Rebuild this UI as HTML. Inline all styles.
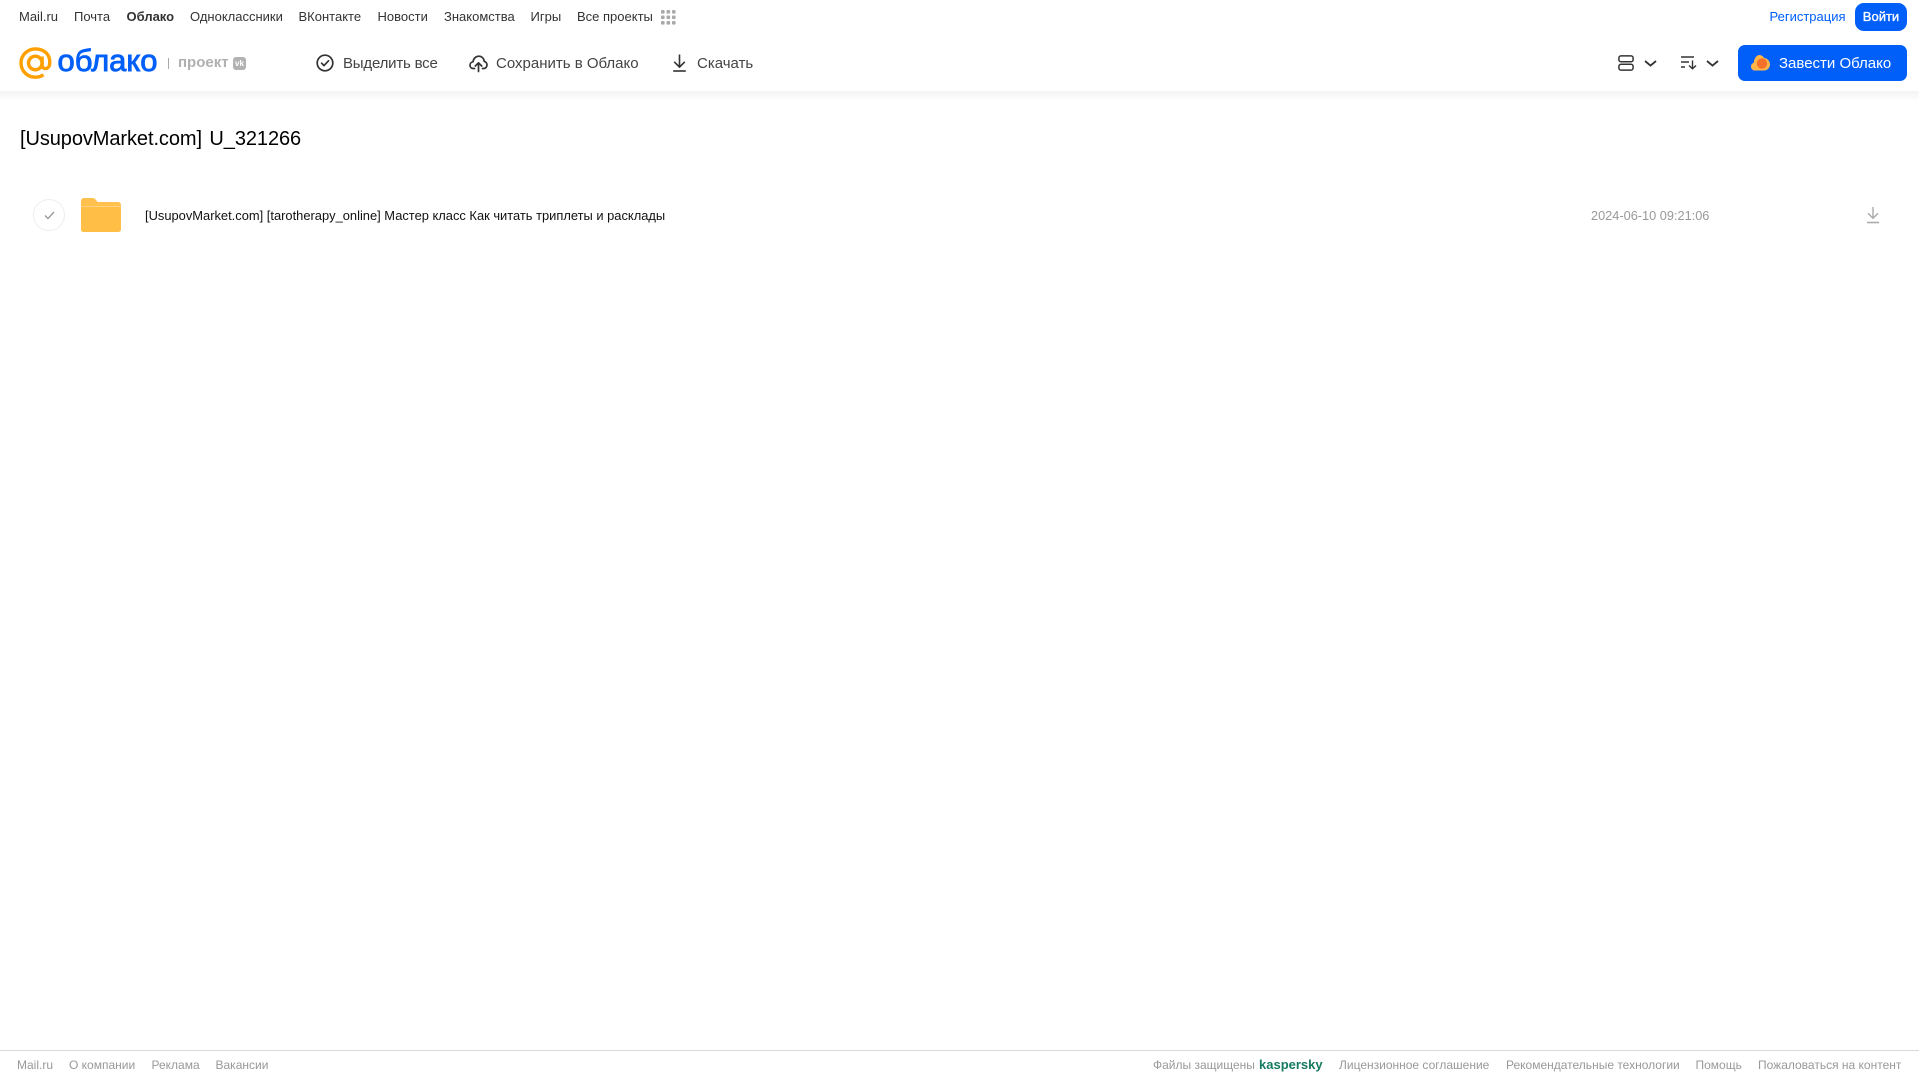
<!DOCTYPE html>
<html lang="ru"><head><meta charset="utf-8"><title>Облако</title>
<style>
html,body{margin:0;padding:0;width:1919px;height:1079px;overflow:hidden;background:#fff;font-family:"Liberation Sans",Arial,sans-serif}
.t{position:absolute;white-space:nowrap;line-height:16px}
.n{top:9px;font-size:13px;color:#333;height:16px}
.h{top:56px;font-size:15px;color:#444;line-height:16px}
.f{top:1057px;font-size:12px;color:#999}
svg{position:absolute;overflow:visible}
</style></head><body>
<div style="position:absolute;left:0;top:91px;width:1919px;height:10px;background:linear-gradient(#f3f3f3,#fff)"></div>

<span class="t n" style="left:19px">Mail.ru</span>
<span class="t n" style="left:74px">Почта</span>
<span class="t n" style="left:126.5px;font-weight:bold">Облако</span>
<span class="t n" style="left:190px">Одноклассники</span>
<span class="t n" style="left:298.5px">ВКонтакте</span>
<span class="t n" style="left:377.5px">Новости</span>
<span class="t n" style="left:444px">Знакомства</span>
<span class="t n" style="left:530.5px">Игры</span>
<span class="t n" style="left:577px">Все проекты</span>
<svg style="left:661px;top:10px" width="15" height="15" fill="#aaa"><rect x="0" y="0" width="3.6" height="3.6" rx="1"/><rect x="5.5" y="0" width="3.6" height="3.6" rx="1"/><rect x="11" y="0" width="3.6" height="3.6" rx="1"/><rect x="0" y="5.5" width="3.6" height="3.6" rx="1"/><rect x="5.5" y="5.5" width="3.6" height="3.6" rx="1"/><rect x="11" y="5.5" width="3.6" height="3.6" rx="1"/><rect x="0" y="11" width="3.6" height="3.6" rx="1"/><rect x="5.5" y="11" width="3.6" height="3.6" rx="1"/><rect x="11" y="11" width="3.6" height="3.6" rx="1"/></svg>

<span class="t n" style="left:1769.5px;color:#005ff9">Регистрация</span>
<div style="position:absolute;left:1855px;top:3px;width:52px;height:28px;border-radius:9px;background:#005ff9;color:#fff;font-size:13px;-webkit-text-stroke:.35px #fff;text-align:center;line-height:28px">Войти</div>

<svg style="left:19px;top:47px" width="33" height="33" viewBox="0 0 33 33" fill="none" stroke="#ffa000" stroke-width="3.4"><circle cx="16.3" cy="16" r="6.8"/><path d="M23.1 9.5V18.5C23.1 22.5 29.8 23 30.6 17.5C32 7.5 25 1.9 16.3 1.9C8.5 1.9 2 8.2 2 16C2 24 8.5 30.2 16.3 30.2C19.5 30.2 22 29.4 24.5 27.8"/></svg>
<svg style="left:0;top:0" width="300" height="90"><text x="57.5" y="71" font-size="31" fill="#005ff9" stroke="#005ff9" stroke-width=".9" textLength="100" lengthAdjust="spacingAndGlyphs" font-family="Liberation Sans, sans-serif">облако</text></svg>
<div style="position:absolute;left:168px;top:58px;width:1px;height:11px;background:#aaa"></div>
<span class="t" style="left:178px;top:55px;font-size:15px;font-weight:bold;color:#b0b0b0">проект</span>
<div style="position:absolute;left:233px;top:57px;width:13px;height:13px;border-radius:3px;background:#b2b2b2;color:#fff;font-size:8px;font-weight:bold;line-height:13px;text-align:center">vk</div>

<svg style="left:316px;top:54px" width="18" height="18" fill="none" stroke="#333" stroke-width="1.7"><circle cx="9" cy="9" r="7.8"/><path d="M5.6 9.2l2.4 2.4 4.5-4.8" stroke-linecap="round" stroke-linejoin="round"/></svg>
<span class="t h" style="left:343px;letter-spacing:-.2px">Выделить все</span>
<svg style="left:469px;top:55px" width="19" height="17" fill="none" stroke="#333" stroke-width="1.7" stroke-linecap="round" stroke-linejoin="round"><path d="M5.5 13.5H4.5C2.3 13.5 1 11.9 1 10.2C1 8.4 2.3 7 4 6.8C4.5 3.5 6.8 1.2 9.8 1.2C12.7 1.2 15 3.4 15.3 6.5C17 6.8 18 8.3 18 10C18 12 16.5 13.5 14.5 13.5H13.5"/><path d="M9.5 16.5V8M6.3 11l3.2-3.2 3.2 3.2"/></svg>
<span class="t h" style="left:496px">Сохранить в Облако</span>
<svg style="left:672px;top:54px" width="15" height="18" fill="none" stroke="#333" stroke-width="1.6"><path d="M7.5 0.5V13M2.2 7.8l5.3 5.3 5.3-5.3"/><path d="M1.2 17H13.8"/></svg>
<span class="t h" style="left:697px">Скачать</span>

<svg style="left:1618px;top:55px" width="16" height="16" fill="none" stroke="#333" stroke-width="1.5"><rect x=".9" y=".9" width="14.2" height="5.8" rx="2"/><rect x=".9" y="9.3" width="14.2" height="5.8" rx="2"/></svg>
<svg style="left:1643.5px;top:60px" width="13" height="7" fill="none" stroke="#333" stroke-width="1.8"><path d="M1 1l5.5 4.6L12 1"/></svg>
<svg style="left:1681px;top:56px" width="16" height="14" fill="none" stroke="#333" stroke-width="1.4"><path d="M0 1H13M0 6H8M0 11H4"/><path d="M11.5 4.5V12.5M8 9.5l3.5 3.3L15 9.5"/></svg>
<svg style="left:1705.5px;top:60px" width="13" height="7" fill="none" stroke="#333" stroke-width="1.8"><path d="M1 1l5.5 4.6L12 1"/></svg>

<div style="position:absolute;left:1738px;top:45px;width:169px;height:36px;border-radius:7px;background:#005ff9"></div>
<svg style="left:1750.5px;top:55px" width="19" height="16"><path d="M4 15.5C1.8 15.5 0 13.8 0 11.6C0 9.8 1.2 8.3 2.8 7.8C3 3.5 5.5 0 8.5 0C10.5 0 12 1.2 13 3C16.3 3.2 19 6 19 9.4C19 12.8 16.3 15.5 13 15.5Z" fill="#ffb74a"/><circle cx="11" cy="8.6" r="5.2" fill="#f5702a"/></svg>
<span class="t" style="left:1779px;top:56px;font-size:15px;color:#fff">Завести Облако</span>

<span class="t" style="left:20px;top:126.5px;font-size:20px;line-height:24px;color:#000;word-spacing:2px;letter-spacing:-.08px">[UsupovMarket.com] U_321266</span>

<div style="position:absolute;left:33px;top:199px;width:30px;height:30px;border:1px solid #eee;border-radius:50%"></div>
<svg style="left:43.5px;top:211px" width="11" height="9" fill="none" stroke="#999" stroke-width="1.3"><path d="M1 4.5l3 3L10 1"/></svg>
<svg style="left:81px;top:198px" width="40" height="34"><path d="M0 3C0 1.3 1.3 0 3 0H11.5C13 0 14 .7 15 2L16.5 4H37C38.7 4 40 5.3 40 7V31C40 32.7 38.7 34 37 34H3C1.3 34 0 32.7 0 31Z" fill="#ffc04d"/><path d="M0 9H40V31C40 32.7 38.7 34 37 34H3C1.3 34 0 32.7 0 31Z" fill="#ffbe45"/><path d="M0 8H40V9H0Z" fill="#ffd27f"/></svg>
<span class="t" style="left:145px;top:208px;font-size:12.9px;color:#111">[UsupovMarket.com] [tarotherapy_online] Мастер класс Как читать триплеты и расклады</span>
<span class="t" style="left:1591px;top:208px;font-size:12.75px;color:#999">2024-06-10 09:21:06</span>
<svg style="left:1866px;top:207px" width="14" height="17" fill="none" stroke="#aaa" stroke-width="1.4"><path d="M7 0V11M2 6.2L7 11.2 12 6.2"/><path d="M1 15.5H13" stroke-width="1.6"/></svg>

<div style="position:absolute;left:0;top:1050px;width:1919px;height:1px;background:#d9d9d9"></div>
<span class="t f" style="left:17px">Mail.ru</span>
<span class="t f" style="left:69px">О компании</span>
<span class="t f" style="left:151.5px">Реклама</span>
<span class="t f" style="left:215.5px">Вакансии</span>
<span class="t f" style="left:1153px">Файлы защищены</span>
<span class="t f" style="left:1259px;font-size:13px;font-weight:bold;color:#157a62">kaspersky</span>
<span class="t f" style="left:1339px">Лицензионное соглашение</span>
<span class="t f" style="left:1506px">Рекомендательные технологии</span>
<span class="t f" style="left:1695.5px">Помощь</span>
<span class="t f" style="left:1758px">Пожаловаться на контент</span>
</body></html>
